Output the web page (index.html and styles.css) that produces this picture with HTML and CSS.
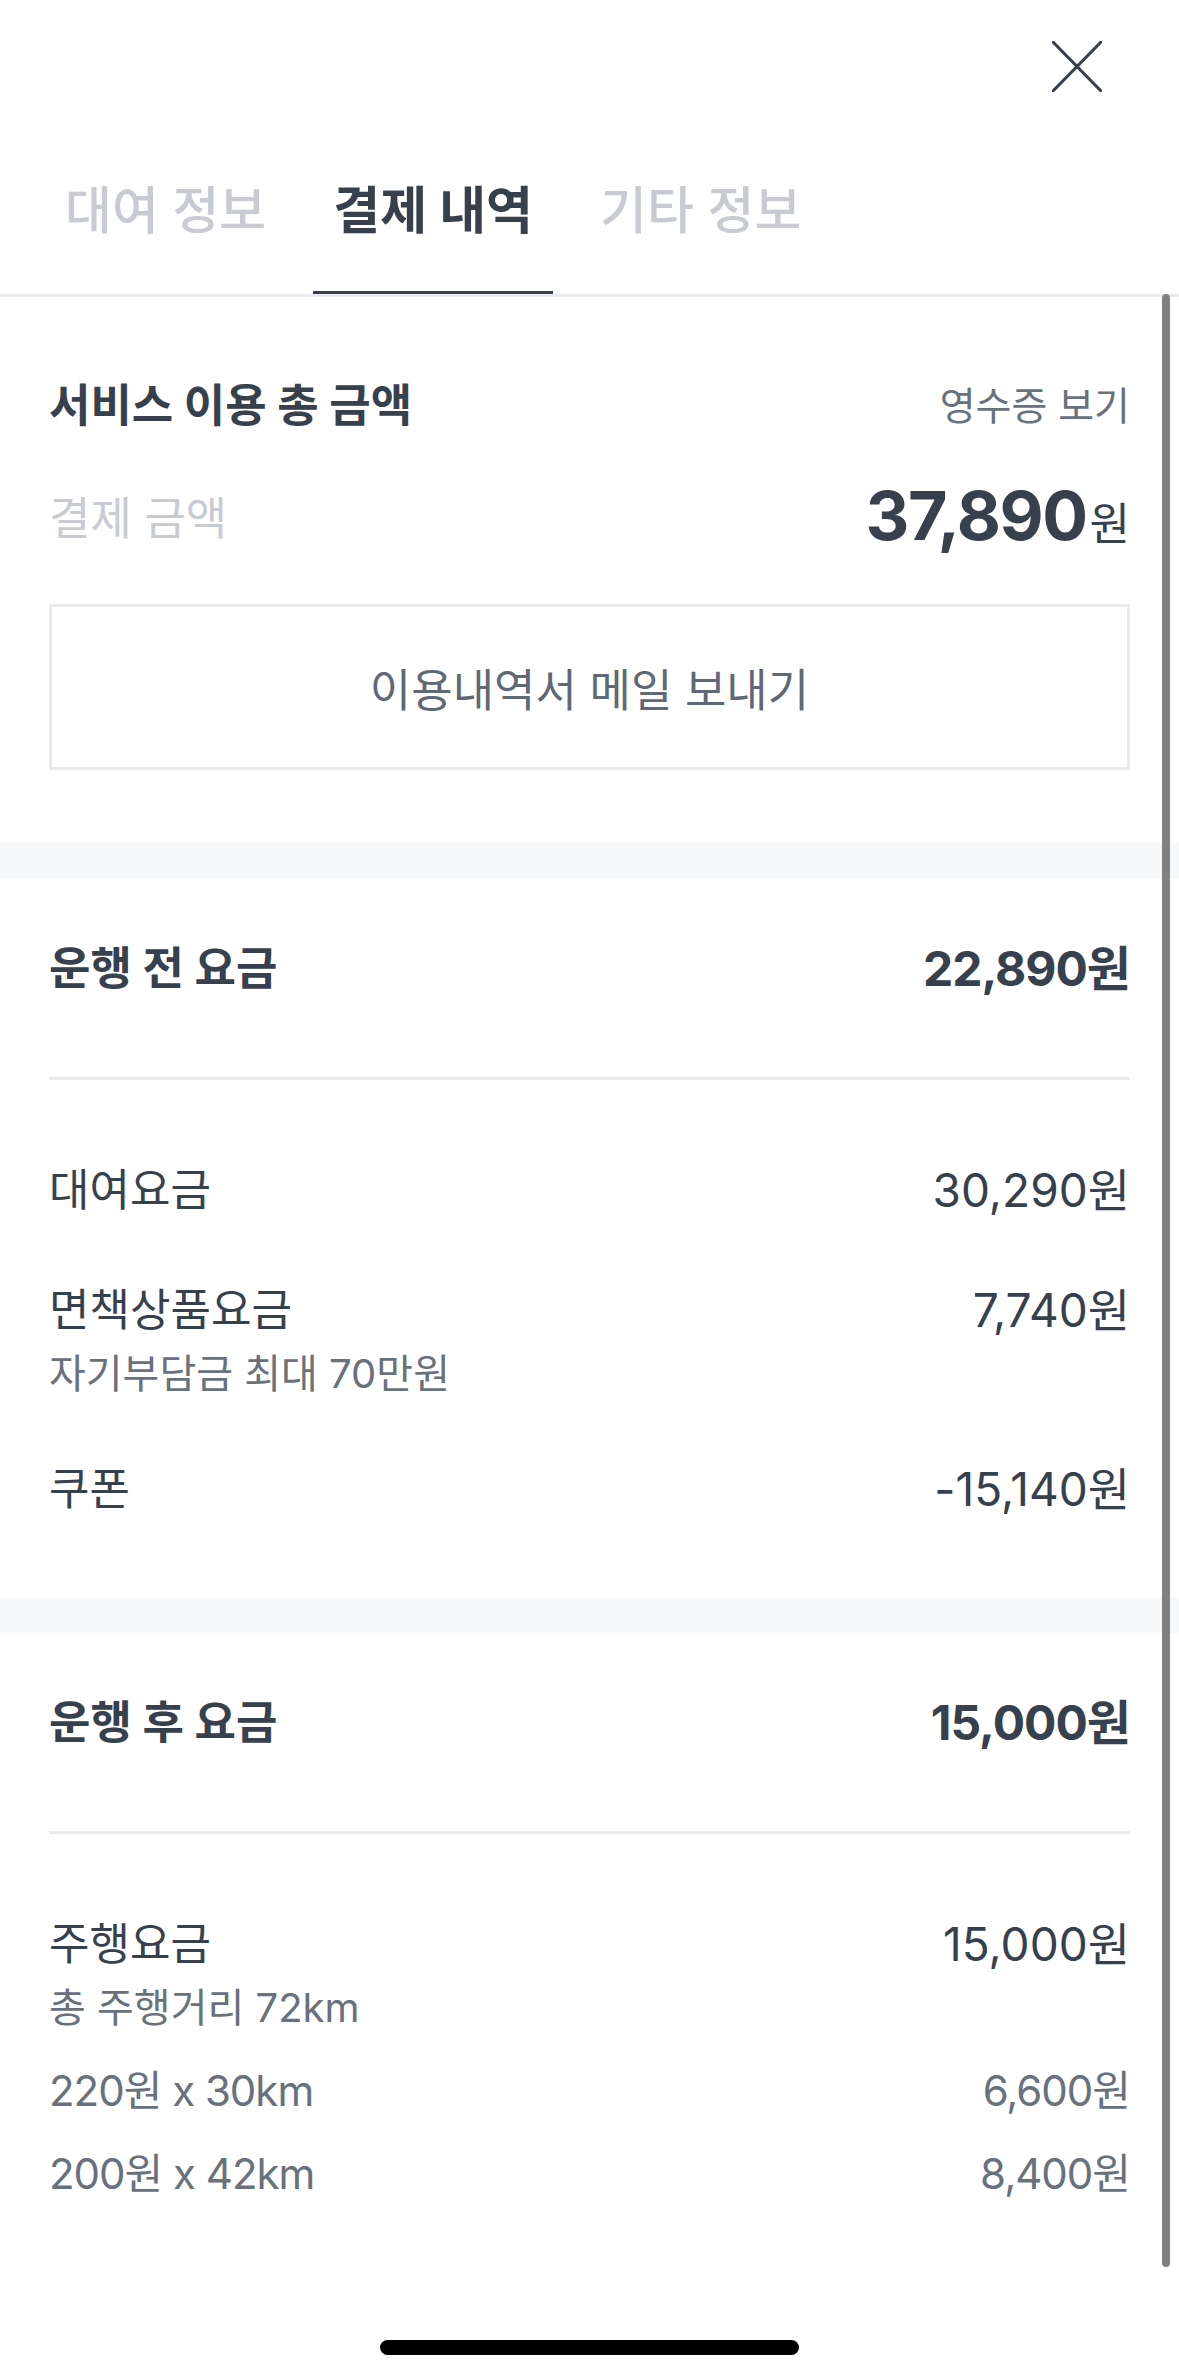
FILE: index.html
```html
<!DOCTYPE html>
<html lang="ko">
<head>
    <meta charset="UTF-8">
    <meta name="viewport" content="width=device-width, initial-scale=1.0">
    <title>결제 내역</title>
    <link rel="stylesheet" href="styles.css">
</head>
<body>
    <div class="sheet">
        <div class="topbar">
            <button class="close-btn" aria-label="닫기">
                <svg width="50" height="51" viewBox="0 0 50 51">
                    <path d="M1.5 1.5 L48.5 49.5 M48.5 1.5 L1.5 49.5" stroke="#36414d" stroke-width="3.2" stroke-linecap="round" fill="none"/>
                </svg>
            </button>
        </div>

        <nav class="tabs">
            <a class="tab">대여 정보</a>
            <a class="tab active">결제 내역</a>
            <a class="tab">기타 정보</a>
        </nav>

        <div class="content">
            <!-- 총 금액 -->
            <section class="summary">
                <div class="summary-head">
                    <h2>서비스 이용 총 금액</h2>
                    <a class="receipt-link">영수증 보기</a>
                </div>
                <div class="pay-row">
                    <span class="pay-label">결제 금액</span>
                    <span class="pay-total">37,890<small>원</small></span>
                </div>
                <button class="mail-btn">이용내역서 메일 보내기</button>
            </section>

            <div class="band"></div>

            <!-- 운행 전 요금 -->
            <section class="fare">
                <div class="fare-head">
                    <h3>운행 전 요금</h3>
                    <span class="fare-sum">22,890원</span>
                </div>
                <ul class="fare-list">
                    <li>
                        <div class="fare-row"><span>대여요금</span><span class="amount">30,290원</span></div>
                    </li>
                    <li>
                        <div class="fare-row"><span>면책상품요금</span><span class="amount">7,740원</span></div>
                        <div class="fare-sub">자기부담금 최대 70만원</div>
                    </li>
                    <li>
                        <div class="fare-row"><span>쿠폰</span><span class="amount">-15,140원</span></div>
                    </li>
                </ul>
            </section>

            <div class="band"></div>

            <!-- 운행 후 요금 -->
            <section class="fare">
                <div class="fare-head">
                    <h3>운행 후 요금</h3>
                    <span class="fare-sum">15,000원</span>
                </div>
                <ul class="fare-list">
                    <li>
                        <div class="fare-row"><span>주행요금</span><span class="amount">15,000원</span></div>
                        <div class="fare-sub">총 주행거리 72km</div>
                        <div class="fare-detail"><span>220원 x 30km</span><span>6,600원</span></div>
                        <div class="fare-detail"><span>200원 x 42km</span><span>8,400원</span></div>
                    </li>
                </ul>
            </section>
        </div>

        <div class="scroll-thumb"></div>
        <div class="home-bar"></div>
    </div>
</body>
</html>
```

FILE: styles.css
```css
body {
    margin: 0;
    background: #fff;
    font-family: 'Inter', 'Noto Sans CJK KR', sans-serif;
    color: #36414d;
}

.sheet {
    position: relative;
    width: 1179px;
    height: 2379px;
    overflow: hidden;
}

.topbar {
    height: 140px;
    display: flex;
    justify-content: flex-end;
    align-items: flex-start;
    padding: 41px 77px 0 0;
    box-sizing: border-box;
}

.close-btn {
    border: none;
    background: none;
    padding: 0;
    width: 50px;
    height: 51px;
}

.close-btn svg {
    display: block;
}

.tabs {
    display: flex;
    gap: 27px;
    padding-left: 45px;
    border-bottom: 3px solid #e9eaee;
}

.tab {
    padding: 41px 20px 53px;
    font-size: 51px;
    line-height: 60px;
    color: #c8cbd1;
    font-weight: 500;
}

.tab.active {
    color: #36414d;
    font-weight: 700;
    box-shadow: inset 0 -3px 0 #36414d;
}

.summary {
    padding: 79px 49px 73px;
}

.summary-head {
    display: flex;
    justify-content: space-between;
    align-items: center;
    height: 60px;
}

.summary-head h2 {
    margin: 0;
    font-size: 45px;
    line-height: 60px;
    font-weight: 700;
}

.receipt-link {
    font-size: 39px;
    line-height: 60px;
    color: #68717c;
}

.pay-row {
    display: flex;
    justify-content: space-between;
    align-items: center;
    margin-top: 43px;
    height: 80px;
}

.pay-label {
    font-size: 45px;
    line-height: 80px;
    color: #c8cbd1;
}

.pay-total {
    font-size: 68px;
    line-height: 80px;
    font-weight: 700;
    letter-spacing: -1.5px;
}

.pay-total small {
    font-size: 44px;
    font-weight: 400;
    margin-left: 3px;
    letter-spacing: 0;
}

.mail-btn {
    display: block;
    width: 100%;
    height: 166px;
    margin-top: 45px;
    border: 3px solid #e8e9ec;
    background: #fff;
    font-family: inherit;
    font-size: 45px;
    color: #5f6975;
}

.band {
    height: 36px;
    background: #f7f8fa;
}

.fare-head {
    margin: 0 49px;
    padding: 60px 0 78px;
    border-bottom: 3px solid #e9eaee;
    display: flex;
    justify-content: space-between;
    align-items: center;
}

.fare-head h3 {
    margin: 0;
    font-size: 45px;
    line-height: 60px;
    font-weight: 700;
}

.fare-sum {
    font-size: 48px;
    line-height: 60px;
    font-weight: 700;
    letter-spacing: -1px;
}

.fare-list {
    list-style: none;
    margin: 0;
    padding: 80px 49px 78px;
    display: flex;
    flex-direction: column;
    gap: 60px;
}

.fare-row {
    display: flex;
    justify-content: space-between;
    align-items: center;
    height: 60px;
    font-size: 44px;
    line-height: 60px;
}

.fare-row .amount {
    font-size: 46px;
}

.fare-sub {
    margin-top: 9px;
    font-size: 40px;
    line-height: 50px;
    color: #68717c;
}

.fare-detail {
    display: flex;
    justify-content: space-between;
    align-items: center;
    height: 50px;
    margin-top: 33px;
    font-size: 42px;
    line-height: 50px;
    color: #68717c;
    letter-spacing: -1px;
}

.scroll-thumb {
    position: absolute;
    top: 294px;
    right: 9px;
    width: 8px;
    height: 1973px;
    border-radius: 4px;
    background: #808080;
}

.home-bar {
    position: absolute;
    left: 380px;
    top: 2340px;
    width: 419px;
    height: 15px;
    border-radius: 8px;
    background: #000;
}
```
